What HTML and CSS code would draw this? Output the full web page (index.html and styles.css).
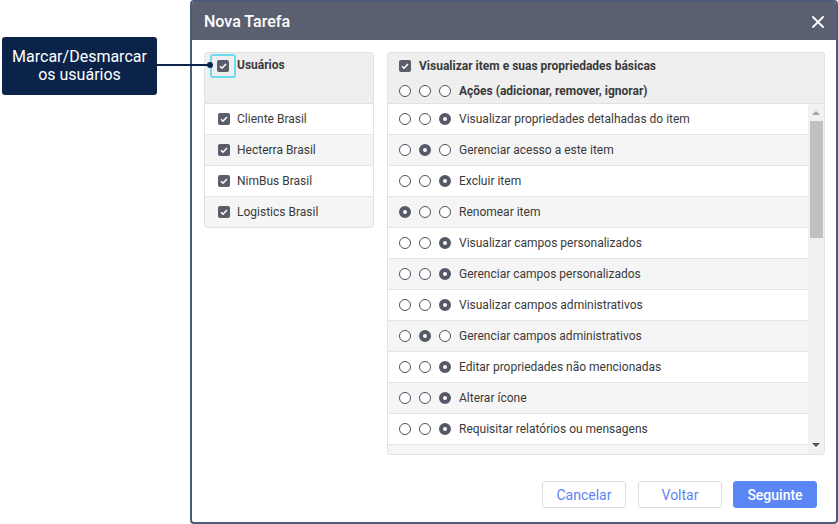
FILE: index.html
```html
<!DOCTYPE html>
<html lang="pt">
<head>
<meta charset="utf-8">
<title>Nova Tarefa</title>
<link rel="stylesheet" href="styles.css">
</head>
<body>
<div class="callout">Marcar/Desmarcar<br>os usuários</div>
<div class="connector"><span class="dot"></span></div>

<div class="dialog">
  <div class="titlebar">
    <span class="title">Nova Tarefa</span>
    <svg class="close" width="12" height="12" viewBox="0 0 12 12"><path d="M1 1L11 11M11 1L1 11" stroke="#fff" stroke-width="1.8" stroke-linecap="round"/></svg>
  </div>
  <div class="body">
    <div class="content">
      <div class="panel users">
        <div class="phead">
          <div class="line1">
            <span class="hl"><span class="cb"><svg viewBox="0 0 12 12"><path d="M3 6.2L5 8.2L9 4" fill="none" stroke="#fff" stroke-width="1.6"/></svg></span></span>
            <span class="bold">Usuários</span>
          </div>
        </div>
        <div class="row"><span class="cb"><svg viewBox="0 0 12 12"><path d="M3 6.2L5 8.2L9 4" fill="none" stroke="#fff" stroke-width="1.6"/></svg></span><span>Cliente Brasil</span></div>
        <div class="row alt"><span class="cb"><svg viewBox="0 0 12 12"><path d="M3 6.2L5 8.2L9 4" fill="none" stroke="#fff" stroke-width="1.6"/></svg></span><span>Hecterra Brasil</span></div>
        <div class="row"><span class="cb"><svg viewBox="0 0 12 12"><path d="M3 6.2L5 8.2L9 4" fill="none" stroke="#fff" stroke-width="1.6"/></svg></span><span>NimBus Brasil</span></div>
        <div class="row alt last"><span class="cb"><svg viewBox="0 0 12 12"><path d="M3 6.2L5 8.2L9 4" fill="none" stroke="#fff" stroke-width="1.6"/></svg></span><span>Logistics Brasil</span></div>
      </div>

      <div class="panel rights">
        <div class="phead">
          <div class="line1"><span class="cb"><svg viewBox="0 0 12 12"><path d="M3 6.2L5 8.2L9 4" fill="none" stroke="#fff" stroke-width="1.6"/></svg></span><span class="bold">Visualizar item e suas propriedades básicas</span></div>
          <div class="line2"><span class="radios"><i class="r"></i><i class="r"></i><i class="r"></i></span><span class="bold">Ações (adicionar, remover, ignorar)</span></div>
        </div>
        <div class="listwrap">
          <div class="list">
            <div class="row"><span class="radios"><i class="r"></i><i class="r"></i><i class="r on"></i></span><span>Visualizar propriedades detalhadas do item</span></div>
            <div class="row alt"><span class="radios"><i class="r"></i><i class="r on"></i><i class="r"></i></span><span>Gerenciar acesso a este item</span></div>
            <div class="row"><span class="radios"><i class="r"></i><i class="r"></i><i class="r on"></i></span><span>Excluir item</span></div>
            <div class="row alt"><span class="radios"><i class="r on"></i><i class="r"></i><i class="r"></i></span><span>Renomear item</span></div>
            <div class="row"><span class="radios"><i class="r"></i><i class="r"></i><i class="r on"></i></span><span>Visualizar campos personalizados</span></div>
            <div class="row alt"><span class="radios"><i class="r"></i><i class="r"></i><i class="r on"></i></span><span>Gerenciar campos personalizados</span></div>
            <div class="row"><span class="radios"><i class="r"></i><i class="r"></i><i class="r on"></i></span><span>Visualizar campos administrativos</span></div>
            <div class="row alt"><span class="radios"><i class="r"></i><i class="r on"></i><i class="r"></i></span><span>Gerenciar campos administrativos</span></div>
            <div class="row"><span class="radios"><i class="r"></i><i class="r"></i><i class="r on"></i></span><span>Editar propriedades não mencionadas</span></div>
            <div class="row alt"><span class="radios"><i class="r"></i><i class="r"></i><i class="r on"></i></span><span>Alterar ícone</span></div>
            <div class="row"><span class="radios"><i class="r"></i><i class="r"></i><i class="r on"></i></span><span>Requisitar relatórios ou mensagens</span></div>
            <div class="row alt"></div>
          </div>
          <div class="scrollbar">
            <span class="arrow up"></span>
            <span class="thumb"></span>
            <span class="track"></span>
            <span class="arrow down"></span>
          </div>
        </div>
      </div>
    </div>
    <div class="buttons">
      <button class="btn">Cancelar</button>
      <button class="btn">Voltar</button>
      <button class="btn primary">Seguinte</button>
    </div>
  </div>
</div>
</body>
</html>
```

FILE: styles.css
```css
* { box-sizing: border-box; }
html, body { margin: 0; padding: 0; }
body {
  width: 838px;
  height: 524px;
  overflow: hidden;
  background: #fff;
  font-family: Roboto, "Liberation Sans", Arial, sans-serif;
  font-size: 12px;
  color: #3a3a3a;
  position: relative;
}

.callout {
  position: absolute;
  left: 2px;
  top: 37px;
  width: 155px;
  height: 58px;
  background: #0b2349;
  border-radius: 3px;
  color: #fff;
  font-size: 16px;
  line-height: 18px;
  text-align: center;
  padding-top: 11px;
}
.connector {
  position: absolute;
  left: 157px;
  top: 64px;
  width: 54px;
  height: 2px;
  background: #0b2349;
  z-index: 3;
}
.connector .dot {
  position: absolute;
  right: -2px;
  top: -2px;
  width: 6px;
  height: 6px;
  border-radius: 50%;
  background: #0b2349;
}

.dialog {
  margin-left: 190px;
  width: 648px;
  height: 524px;
  border: 2px solid #4d5c78;
  border-radius: 4px;
  display: flex;
  flex-direction: column;
  background: #fff;
  overflow: hidden;
}
.titlebar {
  height: 38px;
  flex: none;
  background: #5b6070;
  display: flex;
  align-items: center;
  justify-content: space-between;
  padding: 0 12px 0 12px;
}
.title {
  color: #fff;
  font-size: 16px;
  font-weight: 500;
}
.close { display: block; margin-top: 1px; }

.body {
  flex: 1;
  display: flex;
  flex-direction: column;
  padding: 12px 11px 0 12px;
}
.content {
  display: flex;
  gap: 13px;
  align-items: flex-start;
}
.panel {
  border: 1px solid #e2e2e2;
  border-radius: 3px;
  overflow: hidden;
  background: #fff;
}
.users { width: 170px; }
.rights { width: 438px; height: 403px; display: flex; flex-direction: column; }

.phead {
  height: 51px;
  flex: none;
  background: #efefef;
  border-bottom: 1px solid #e2e2e2;
}
.line1 {
  height: 25px;
  display: flex;
  align-items: center;
  padding-left: 11px;
  gap: 8px;
}
.users .line1 { align-items: flex-start; padding-left: 12px; gap: 8px; }
.users .line1 .bold { margin-top: 5px; }
.line2 {
  height: 25px;
  display: flex;
  align-items: center;
  padding-left: 11px;
}
.bold { font-weight: 700; color: #3a3a3a; }

.cb {
  width: 12px;
  height: 12px;
  border-radius: 2px;
  background: #5a5d6b;
  display: inline-block;
  flex: none;
}
.cb svg { display: block; width: 12px; height: 12px; }

.hl {
  display: inline-flex;
  align-items: center;
  justify-content: center;
  width: 26px;
  height: 24px;
  border: 2px solid #6ddcf0;
  border-radius: 3px;
  margin-left: -7px;
  margin-right: -7px;
  margin-top: 1px;
  position: relative;
  z-index: 2;
}

.row {
  height: 31px;
  display: flex;
  align-items: center;
  border-bottom: 1px solid #e6e6e6;
  background: #fff;
}
.row.alt { background: #f5f5f5; }
.row.last { border-bottom: none; height: 30px; }
.users .row { padding-left: 13px; gap: 7px; }

.listwrap {
  flex: 1;
  display: flex;
  min-height: 0;
}
.list {
  flex: 1;
  overflow: hidden;
}
.list .row { padding-left: 11px; }

.radios {
  display: inline-flex;
  gap: 8px;
  margin-right: 8px;
}
.r {
  display: block;
  width: 12px;
  height: 12px;
  border-radius: 50%;
  border: 1px solid #4e5160;
  background: #fff;
}
.r.on {
  border: 4px solid #555866;
  background: #fff;
}

.scrollbar {
  width: 16px;
  flex: none;
  background: #f1f1f1;
  display: flex;
  flex-direction: column;
  align-items: center;
}
.arrow {
  width: 0;
  height: 0;
  border-left: 4px solid transparent;
  border-right: 4px solid transparent;
  flex: none;
}
.arrow.up { border-bottom: 4px solid #a3a3a3; margin-top: 7px; }
.arrow.down { border-top: 4px solid #505050; margin-bottom: 7px; }
.thumb {
  width: 13px;
  height: 117px;
  background: #c1c1c1;
  margin-top: 6px;
  flex: none;
}
.track { flex: 1; }

.buttons {
  display: flex;
  justify-content: flex-end;
  gap: 11px;
  padding-right: 8px;
  margin-top: 26px;
}
.btn {
  width: 84px;
  height: 27px;
  border: 1px solid #dedede;
  border-radius: 3px;
  background: #fff;
  color: #5b86f5;
  font-family: Roboto, "Liberation Sans", Arial, sans-serif;
  font-size: 14px;
  padding: 0;
  cursor: pointer;
}
.btn:first-child { margin-right: 1px; }
.btn.primary {
  background: #5b86f5;
  border-color: #5b86f5;
  color: #fff;
  font-weight: 500;
}
```
